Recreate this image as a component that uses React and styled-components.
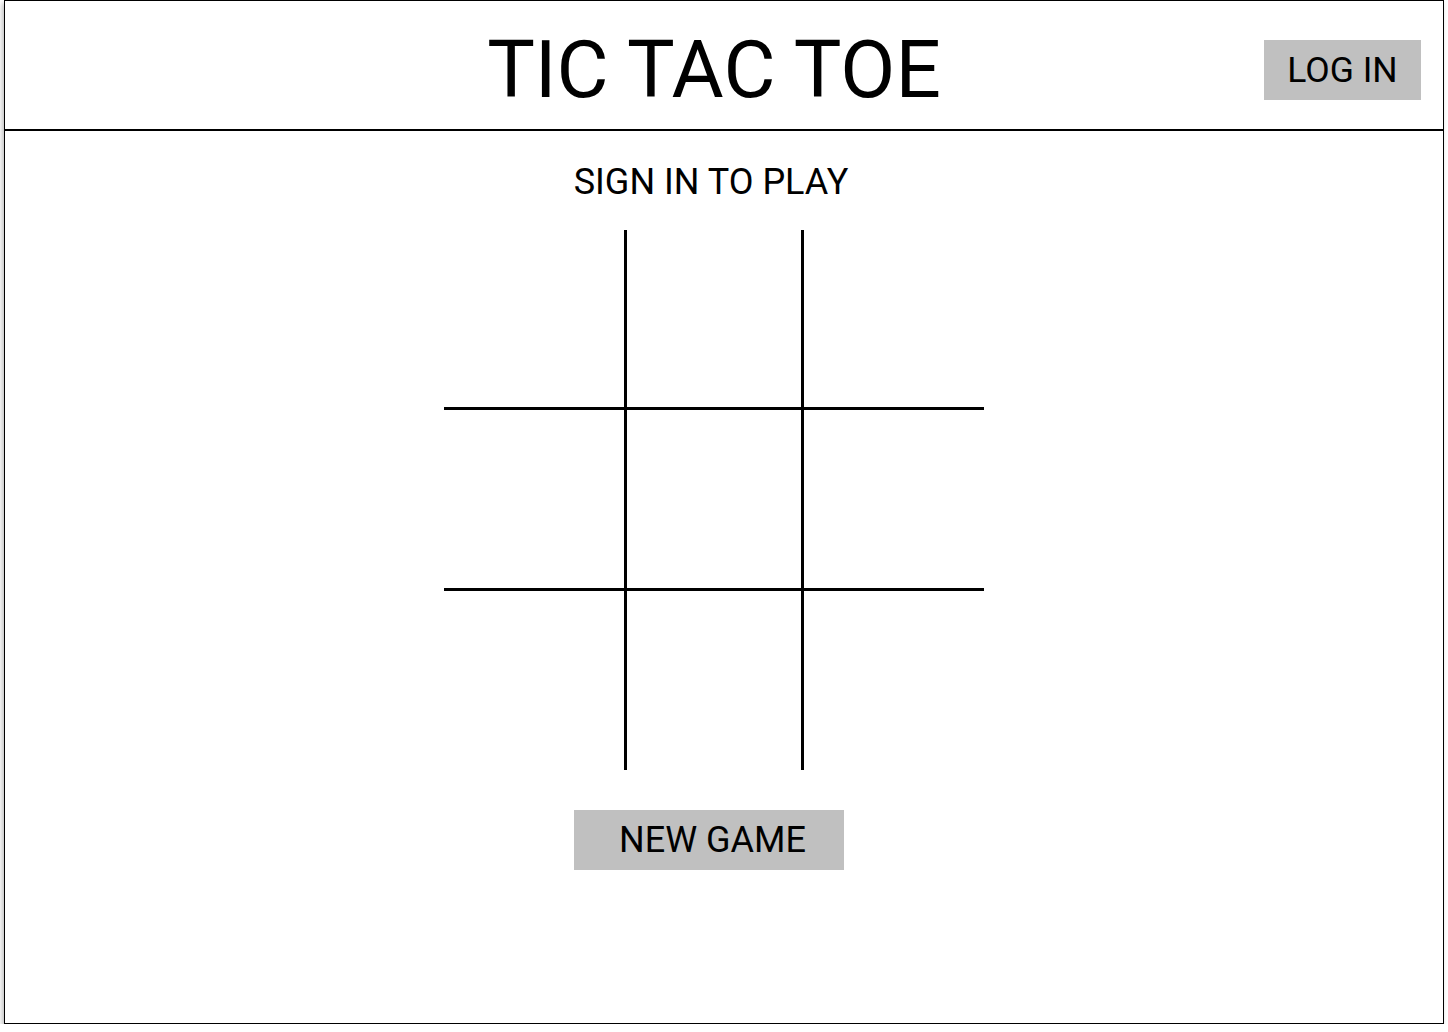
import React from "react";
import styled, { createGlobalStyle } from "styled-components";

const Global = createGlobalStyle`
  html, body { margin: 0; padding: 0; background: #ffffff; }
  body { font-family: Roboto, "Liberation Sans", sans-serif; color: #000; }
`;

const Frame = styled.div`
  box-sizing: border-box;
  margin-left: 4px;
  width: 1440px;
  height: 1024px;
  border: 1.5px solid #000;
  background: #fff;
  box-shadow: -2px 3px 5px rgba(0, 0, 0, 0.25);
  display: flex;
  flex-direction: column;
`;

const Header = styled.header`
  box-sizing: border-box;
  height: 130px;
  border-bottom: 2px solid #000;
  display: grid;
  grid-template-columns: 1fr auto 1fr;
  align-items: center;
  padding-right: 20px;
  padding-top: 10px;
`;

const Title = styled.h1`
  grid-column: 2;
  margin: 0;
  font-size: 80px;
  font-weight: 400;
  line-height: 1;
  letter-spacing: 0;
`;

const Button = styled.button`
  box-sizing: border-box;
  width: ${(p) => p.$w}px;
  height: 60px;
  border: none;
  background: #c0c0c0;
  font-family: Roboto, "Liberation Sans", sans-serif;
  font-size: ${(p) => p.$fs || 35}px;
  font-weight: 400;
  color: #000;
  padding: 0 0 0 ${(p) => p.$shift || 0}px;
  display: flex;
  align-items: center;
  justify-content: center;
  cursor: pointer;
`;

const HeaderSide = styled.div`
  grid-column: 3;
  display: flex;
  justify-content: flex-end;
  margin-right: 2px;
`;

const Main = styled.main`
  flex: 1;
  display: flex;
  flex-direction: column;
  align-items: center;
  padding-right: 20px;
`;

const Prompt = styled.div`
  margin-top: 30px;
  margin-right: 6px;
  font-size: 36px;
  line-height: 42px;
`;

const Board = styled.div`
  margin-top: 27px;
  display: grid;
  grid-template-columns: 183px 177px 180px;
  grid-template-rows: 180px 181px 179px;
`;

const Cell = styled.div`
  box-sizing: border-box;
  border-right: ${(p) => (p.$col < 2 ? "3px solid #000" : "none")};
  border-bottom: ${(p) => (p.$row < 2 ? "3px solid #000" : "none")};
`;

const Footer = styled.div`
  margin-top: 40px;
  display: flex;
  justify-content: center;
  margin-left: -10px;
`;

export default function App() {
  const cells = [];
  for (let r = 0; r < 3; r++)
    for (let c = 0; c < 3; c++) cells.push(<Cell key={`${r}-${c}`} $row={r} $col={c} />);
  return (
    <>
      <Global />
      <Frame>
        <Header>
          <Title>TIC TAC TOE</Title>
          <HeaderSide>
            <Button $w={157} $fs={35.5}>LOG IN</Button>
          </HeaderSide>
        </Header>
        <Main>
          <Prompt>SIGN IN TO PLAY</Prompt>
          <Board>{cells}</Board>
          <Footer>
            <Button $w={270} $fs={36} $shift={7}>NEW GAME</Button>
          </Footer>
        </Main>
      </Frame>
    </>
  );
}
